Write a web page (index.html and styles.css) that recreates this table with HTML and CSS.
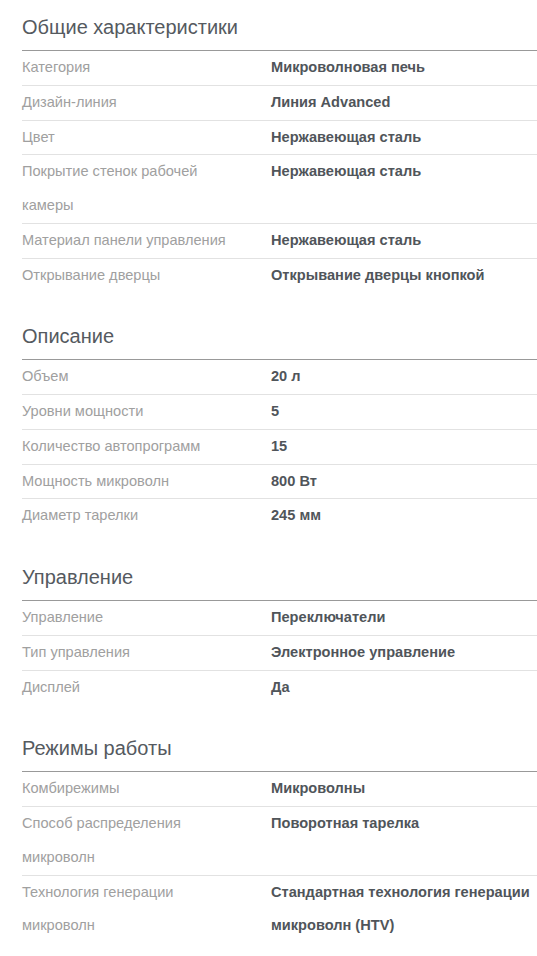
FILE: index.html
```html
<!DOCTYPE html>
<html lang="ru">
<head>
<meta charset="utf-8">
<link rel="stylesheet" href="styles.css">
</head>
<body>
<div class="specs">
  <section class="group">
    <h2 class="group-title">Общие характеристики</h2>
    <div class="row"><div class="label">Категория</div><div class="value">Микроволновая печь</div></div>
    <div class="row"><div class="label">Дизайн-линия</div><div class="value">Линия Advanced</div></div>
    <div class="row"><div class="label">Цвет</div><div class="value">Нержавеющая сталь</div></div>
    <div class="row"><div class="label">Покрытие стенок рабочей камеры</div><div class="value">Нержавеющая сталь</div></div>
    <div class="row"><div class="label">Материал панели управления</div><div class="value">Нержавеющая сталь</div></div>
    <div class="row"><div class="label">Открывание дверцы</div><div class="value">Открывание дверцы кнопкой</div></div>
  </section>
  <section class="group">
    <h2 class="group-title">Описание</h2>
    <div class="row"><div class="label">Объем</div><div class="value">20 л</div></div>
    <div class="row"><div class="label">Уровни мощности</div><div class="value">5</div></div>
    <div class="row"><div class="label">Количество автопрограмм</div><div class="value">15</div></div>
    <div class="row"><div class="label">Мощность микроволн</div><div class="value">800 Вт</div></div>
    <div class="row"><div class="label">Диаметр тарелки</div><div class="value">245 мм</div></div>
  </section>
  <section class="group">
    <h2 class="group-title">Управление</h2>
    <div class="row"><div class="label">Управление</div><div class="value">Переключатели</div></div>
    <div class="row"><div class="label">Тип управления</div><div class="value">Электронное управление</div></div>
    <div class="row"><div class="label">Дисплей</div><div class="value">Да</div></div>
  </section>
  <section class="group">
    <h2 class="group-title">Режимы работы</h2>
    <div class="row"><div class="label">Комбирежимы</div><div class="value">Микроволны</div></div>
    <div class="row"><div class="label">Способ распределения микроволн</div><div class="value">Поворотная тарелка</div></div>
    <div class="row"><div class="label">Технология генерации микроволн</div><div class="value">Стандартная технология генерации микроволн (HTV)</div></div>
  </section>
</div>
</body>
</html>
```
FILE: styles.css
```css
html, body {
  margin: 0;
  padding: 0;
  background: #fff;
}
body {
  font-family: "Liberation Sans", Arial, sans-serif;
}
.specs {
  padding-left: 22px;
}
.group {
  margin-bottom: 17px;
}
.group-title {
  margin: 0;
  padding: 15px 0 11px;
  font-size: 20px;
  line-height: 24px;
  font-weight: normal;
  color: #555a5f;
  border-bottom: 1px solid #999;
}
.row {
  display: grid;
  grid-template-columns: 249px 1fr;
  font-size: 14.6px;
  line-height: 33.75px;
  border-bottom: 1px solid #e2e2e2;
}
.row:last-child {
  border-bottom: none;
}
.label {
  color: #a0a0a0;
  padding-right: 32px;
}
.value {
  color: #50555a;
  font-weight: bold;
}
```
